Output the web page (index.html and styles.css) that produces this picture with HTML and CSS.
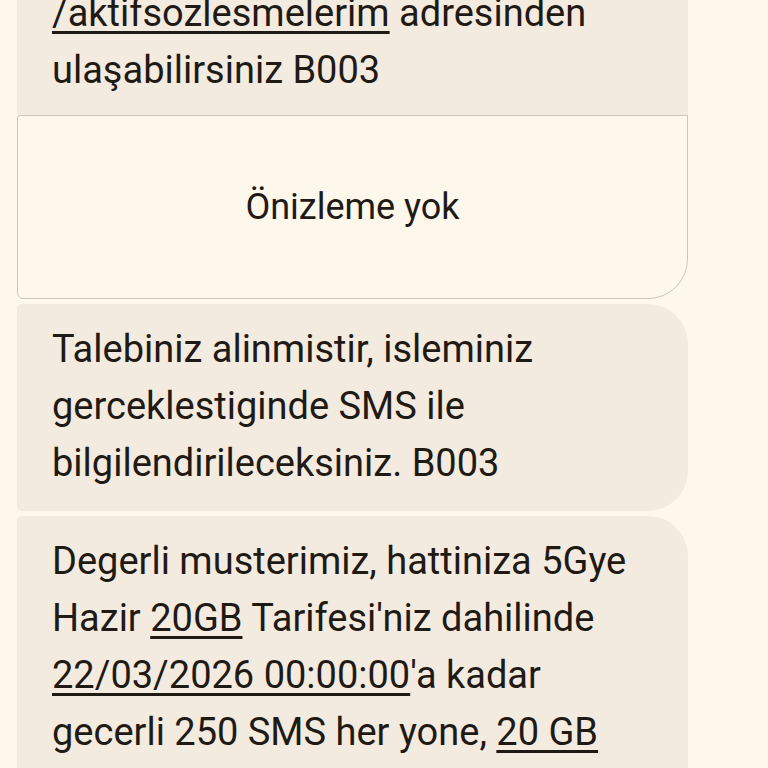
FILE: index.html
```html
<!DOCTYPE html>
<html lang="tr">
<head>
<meta charset="utf-8">
<link rel="stylesheet" href="styles.css">
</head>
<body>
<div class="thread">
  <div class="bubble bubble-top">
    <p class="msg"><span class="link">/aktifsozlesmelerim</span> adresinden<br>ulaşabilirsiniz B003</p>
  </div>
  <div class="preview">
    <span class="preview-text">Önizleme yok</span>
  </div>
  <div class="bubble">
    <p class="msg">Talebiniz alinmistir, isleminiz<br>gerceklestiginde SMS ile<br>bilgilendirileceksiniz. B003</p>
  </div>
  <div class="bubble">
    <p class="msg">Degerli musterimiz, hattiniza 5Gye<br>Hazir <span class="link">20GB</span> Tarifesi'niz dahilinde<br><span class="link">22/03/2026 00:00:00</span>'a kadar<br>gecerli 250 SMS her yone, <span class="link">20 GB</span><br>internet</p>
  </div>
</div>
</body>
</html>
```

FILE: styles.css
```css
html, body {
  margin: 0;
  padding: 0;
  background: #fdf7ec;
  height: 100%;
  overflow: hidden;
}
.thread {
  display: flex;
  flex-direction: column;
  gap: 5px;
  width: 671px;
  margin: -32px 0 0 17px;
}
.bubble {
  background: #f4ebe0;
  border-radius: 5px 40px 40px 5px;
  padding: 17px 20px 19px 35px;
}
.bubble-top {
  border-radius: 5px 0 0 0;
  padding-bottom: 16px;
}
.thread .bubble-top + .preview {
  margin-top: -5px;
}
.msg {
  margin: 0;
  font-family: Roboto, "Noto Sans", sans-serif;
  font-size: 38px;
  line-height: 57px;
  color: #1f1a14;
  white-space: nowrap;
}
.link {
  text-decoration: underline;
  text-decoration-thickness: 3px;
  text-underline-offset: 5px;
}
.preview {
  height: 184px;
  box-sizing: border-box;
  border: 1.5px solid #cdc6bb;
  border-radius: 3px 0 40px 6px;
  background: #fdf7ec;
  display: flex;
  align-items: center;
  justify-content: center;
}
.preview-text {
  font-family: Roboto, "Noto Sans", sans-serif;
  font-size: 36px;
  color: #1f1a14;
}
```
